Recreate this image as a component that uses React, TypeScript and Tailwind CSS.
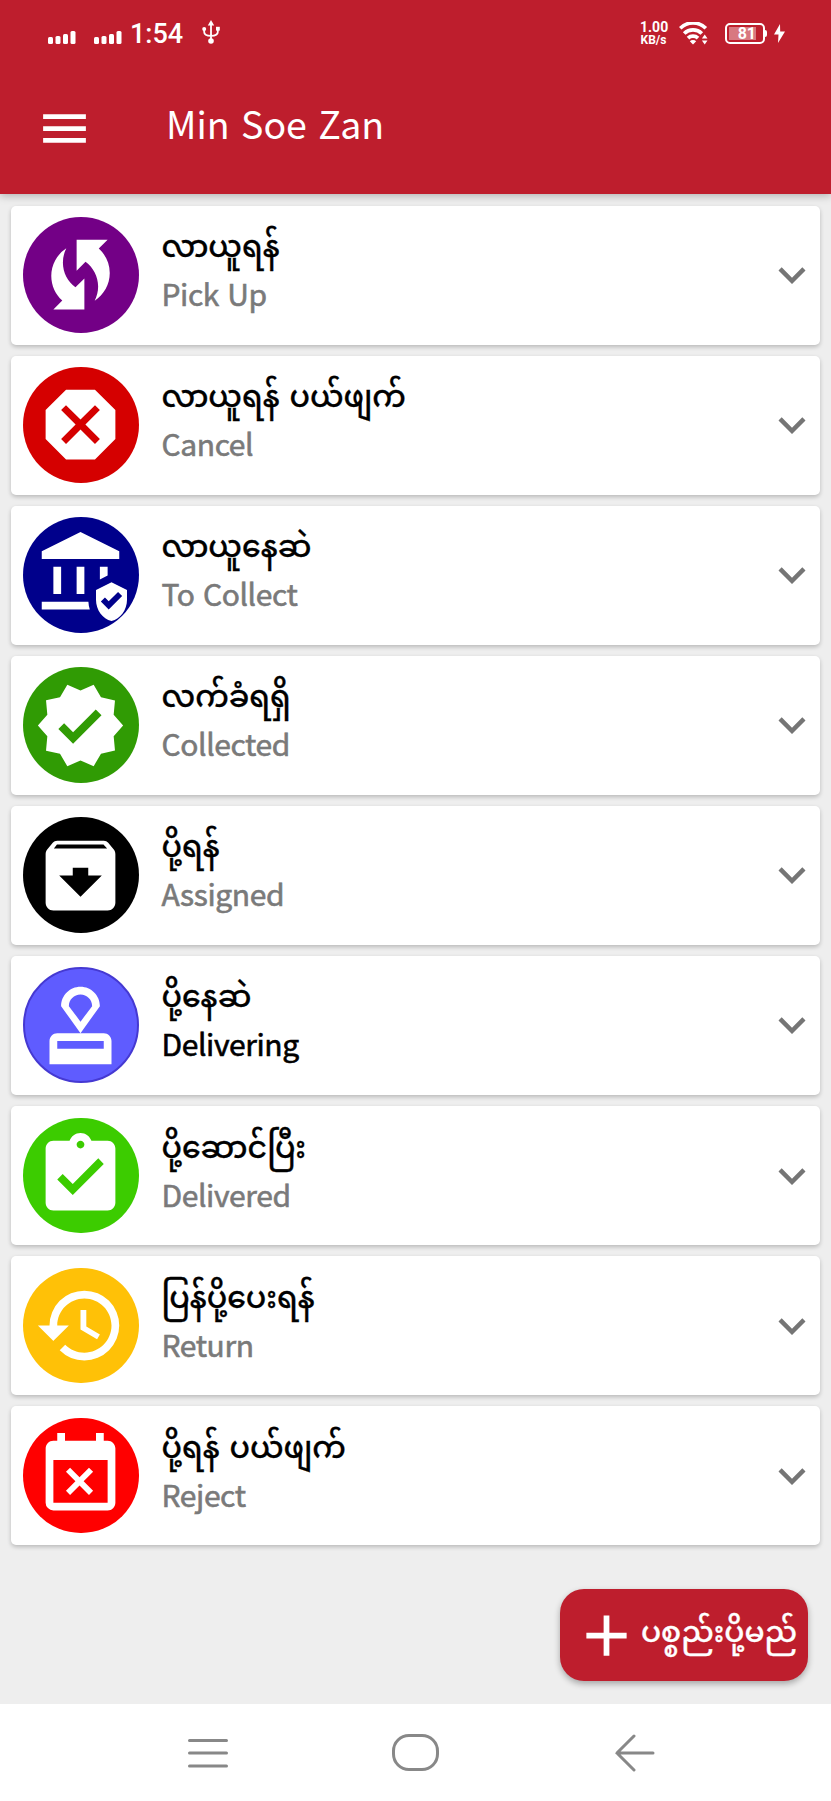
import type { IconType } from 'react-icons';
import {
  MdAdd,
  MdArchive,
  MdAssignmentTurnedIn,
  MdAssuredWorkload,
  MdDangerous,
  MdEventBusy,
  MdHistory,
  MdKeyboardArrowDown,
  MdMenu,
  MdOutlineApproval,
  MdVerified,
  MdWifiProtectedSetup
} from 'react-icons/md';

type Status = {
  title: string;
  label: string;
  icon: IconType;
  circle: string;
  active?: boolean;
};

const statuses: Status[] = [
  { title: 'လာယူရန်', label: 'Pick Up', icon: MdWifiProtectedSetup, circle: 'bg-[#730086]' },
  { title: 'လာယူရန် ပယ်ဖျက်', label: 'Cancel', icon: MdDangerous, circle: 'bg-[#d50000]' },
  { title: 'လာယူနေဆဲ', label: 'To Collect', icon: MdAssuredWorkload, circle: 'bg-[#00008b]' },
  { title: 'လက်ခံရရှိ', label: 'Collected', icon: MdVerified, circle: 'bg-[#309b04]' },
  { title: 'ပို့ရန်', label: 'Assigned', icon: MdArchive, circle: 'bg-black' },
  {
    title: 'ပို့နေဆဲ',
    label: 'Delivering',
    icon: MdOutlineApproval,
    circle: 'bg-[#5f5cff] border-2 border-[#4539d2]',
    active: true
  },
  { title: 'ပို့ဆောင်ပြီး', label: 'Delivered', icon: MdAssignmentTurnedIn, circle: 'bg-[#3ccc00]' },
  { title: 'ပြန်ပို့ပေးရန်', label: 'Return', icon: MdHistory, circle: 'bg-[#ffc107]' },
  { title: 'ပို့ရန် ပယ်ဖျက်', label: 'Reject', icon: MdEventBusy, circle: 'bg-[#ff0000]' }
];

const SignalBars = () => (
  <svg className="h-[13px] w-[28px]" viewBox="0 0 28 13" fill="currentColor">
    <rect x="0" y="6" width="5" height="7" rx="1.5" />
    <rect x="7.5" y="5" width="5" height="8" rx="1.5" />
    <rect x="15" y="3" width="5" height="10" rx="1.5" />
    <rect x="22.5" y="0" width="5" height="13" rx="1.5" />
  </svg>
);

const UsbIcon = () => (
  <svg className="h-[24px] w-[18px]" viewBox="0 0 18 24" fill="none" stroke="currentColor" strokeWidth="1.8">
    <path d="M9 4v17M2.200 9v3c0 2.300 2.500 3.800 6.800 3.800s6.800-1.500 6.800-3.800V8.500" />
    <path d="M9 0l3.200 5.500H5.800z" fill="currentColor" stroke="none" />
    <circle cx="9" cy="21" r="2.800" fill="currentColor" stroke="none" />
    <circle cx="2.200" cy="9" r="2" fill="currentColor" stroke="none" />
    <rect x="14" y="6.800" width="3.800" height="3.800" fill="currentColor" stroke="none" />
  </svg>
);

const WifiIcon = () => (
  <svg className="h-[23px] w-[29px]" viewBox="0 0 29 23" fill="none" stroke="currentColor" strokeWidth="3.7">
    <path d="M1.200 6.300a18 18 0 0 1 25.600 0" />
    <path d="M5.200 11.500a12.500 12.500 0 0 1 17.600 0" />
    <path d="M9 16.200a7.300 7.300 0 0 1 10 0" />
    <path d="M10.800 19.200a4.600 4.600 0 0 1 6.400 0L14 22.600z" fill="currentColor" stroke="none" />
    <path d="M25.700 12.500l2.800 4h-5.600zM25.700 22.500l2.800-4h-5.600z" fill="currentColor" stroke="none" />
  </svg>
);

const StatusBar = () => (
  <div className="flex h-[67px] items-center pl-[48px] pr-[46px] font-['Roboto',sans-serif]">
    <div className="mt-[8px] flex gap-[18px]">
      <SignalBars />
      <SignalBars />
    </div>
    <span className="ml-[8px] mt-[1px] w-[53px] whitespace-nowrap text-[27px] font-medium">1:54</span>
    <div className="-mt-[3px] ml-[19px]">
      <UsbIcon />
    </div>
    <div className="-mt-[1px] ml-auto w-[27px] text-center font-bold">
      <p className="text-[14px] leading-[13px]">1.00</p>
      <p className="text-[12px] leading-[12px]">KB/s</p>
    </div>
    <div className="-mt-[1px] ml-[12px]">
      <WifiIcon />
    </div>
    <div className="ml-[17px] flex items-center">
      <div className="h-[21px] w-[40px] rounded-[5px] border-2 border-current p-[2px]">
        <div className="flex h-full w-[27px] items-center justify-end bg-white/40">
          <span className="text-[16px] font-bold">81</span>
        </div>
      </div>
      <div className="h-[7px] w-[2px] rounded-r bg-white" />
    </div>
    <svg className="ml-[7px] h-[19px] w-[11px]" viewBox="0 0 11 19" fill="currentColor">
      <path d="M6 0L0 10.500h4.500L4 19l7-11.500H6.200z" />
    </svg>
  </div>
);

const StatusCard = ({ status }: { status: Status }) => {
  const Icon = status.icon;
  return (
    <div className="flex h-[139px] items-start rounded-[5px] bg-white pl-[12px] pt-[11.5px] shadow-[0_2px_4px_rgba(0,0,0,0.22)]">
      <div className={`flex h-[115.5px] w-[115.5px] shrink-0 items-center justify-center rounded-full text-white ${status.circle}`}>
        <Icon className="h-[93px] w-[93px] shrink-0" />
      </div>
      <div className="ml-[23px] flex-1">
        <h3 className="h-[54px] whitespace-nowrap text-[30px] font-medium leading-[54px] text-black [word-spacing:3px] [-webkit-text-stroke:0.3px_currentColor]">
          {status.title}
        </h3>
        <p
          className={`text-[30px] leading-[45px] tracking-[-0.4px] [word-spacing:2px] [-webkit-text-stroke:0.6px_currentColor] ${
            status.active ? 'text-black' : 'text-[#7a7a7a]'
          }`}
        >
          {status.label}
        </p>
      </div>
      <MdKeyboardArrowDown className="mr-[1px] mt-[31px] h-[54px] w-[54px] text-[#757575]" />
    </div>
  );
};

export default function App() {
  return (
    <div className="flex h-[1801px] w-[831px] flex-col bg-[#eeeeee] font-['Noto_Sans_CJK_SC','Noto_Sans_Myanmar','Noto_Sans',sans-serif]">
      <header className="h-[194px] bg-[#be1e2d] text-white shadow-[0_2px_8px_rgba(0,0,0,0.25)]">
        <StatusBar />
        <div className="flex h-[123px] items-center pl-[36px]">
          <MdMenu className="h-[57px] w-[57px]" />
          <h1 className="-mt-[11px] ml-[73px] text-[37.5px] [word-spacing:3px]">Min Soe Zan</h1>
        </div>
      </header>

      <main className="flex flex-1 flex-col px-[11px] pt-[11.5px]">
        <div className="flex flex-col gap-[11.1px]">
          {statuses.map((status) => (
            <StatusCard key={status.label} status={status} />
          ))}
        </div>
        <button className="mr-[12px] mt-[44px] flex h-[92px] w-[248px] items-center self-end rounded-[24px] bg-[#be1e2d] pl-[12px] text-white shadow-[0_3px_6px_rgba(0,0,0,0.3)]">
          <MdAdd className="h-[69px] w-[69px] shrink-0" />
          <span className="-mt-[12px] whitespace-nowrap text-[29.5px] font-medium [-webkit-text-stroke:0.3px_currentColor]">
            ပစ္စည်းပို့မည်
          </span>
        </button>
      </main>

      <nav className="flex h-[97px] items-center bg-white pl-[187px] text-[#888888]">
        <svg className="h-[38px] w-[42px]" viewBox="0 0 42 38" fill="none" stroke="currentColor" strokeWidth="3" strokeLinecap="round">
          <path d="M2.500 6.500h37M2.500 19h37M2.500 32h37" />
        </svg>
        <div className="ml-[163px] h-[37px] w-[47px] rounded-[17px] border-[3px] border-current" />
        <svg className="ml-[175px] h-[38px] w-[42px]" viewBox="0 0 42 38" fill="none" stroke="currentColor" strokeWidth="3" strokeLinecap="round">
          <path d="M20 2L3 19l17 17M3 19h36" />
        </svg>
      </nav>
    </div>
  );
}
